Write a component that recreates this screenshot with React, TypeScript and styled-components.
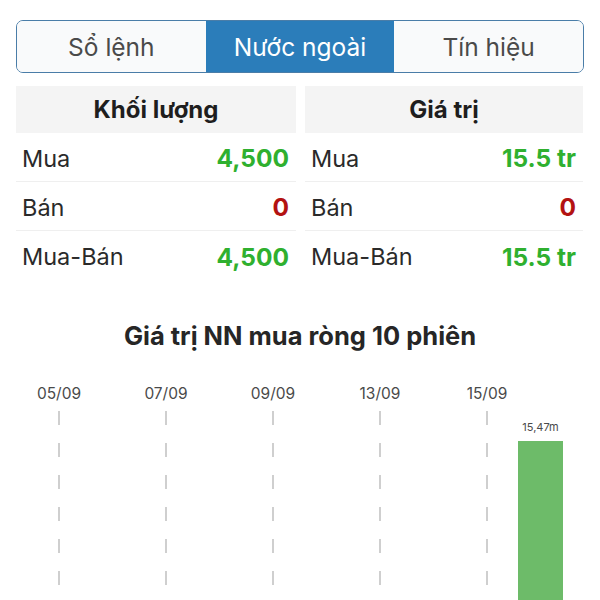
import styled, { createGlobalStyle } from 'styled-components';

const Global = createGlobalStyle`
  body {
    margin: 0;
    background: #fff;
    font-family: Inter, "Noto Sans", "Liberation Sans", sans-serif;
  }
`

const Page = styled.div`
  width: 600px;
  height: 600px;
  overflow: hidden;
  padding: 20px 16px 0;
  box-sizing: border-box;
`

const Segmented = styled.div`
  display: grid;
  grid-template-columns: repeat(3, 1fr);
  height: 53px;
  border: 1.5px solid #4a7da8;
  border-radius: 7px;
  overflow: hidden;
  box-sizing: border-box;
`

const Segment = styled.div<{ $active?: boolean }>`
  display: flex;
  align-items: center;
  justify-content: center;
  font-size: 24.5px;
  color: ${p => (p.$active ? '#fff' : '#4a4a4a')};
  background: ${p => (p.$active ? '#2b7dba' : '#f9fafb')};
`

const Cards = styled.div`
  display: grid;
  grid-template-columns: 280px 278px;
  gap: 9px;
  margin-top: 13px;
`

const Card = styled.div`
  display: flex;
  flex-direction: column;
`

const CardHead = styled.div`
  height: 47px;
  background: #f4f4f4;
  display: flex;
  align-items: center;
  justify-content: center;
  font-size: 24px;
  font-weight: 700;
  color: #1e1e1e;
`

const Row = styled.div`
  height: 49px;
  display: flex;
  align-items: center;
  justify-content: space-between;
  padding: 2px 7px 0 6px;
  box-sizing: border-box;
  border-bottom: 1px solid #efefef;
  &:last-child {
    border-bottom: none;
  }
`

const Label = styled.span`
  font-size: 23.5px;
  color: #2a2a2a;
`

const Value = styled.span<{ $tone: 'up' | 'down' }>`
  font-size: 24.5px;
  font-weight: 700;
  color: ${p => (p.$tone === 'up' ? '#2fb02f' : '#b31212')};
`

const Title = styled.div`
  margin-top: 41px;
  text-align: center;
  font-size: 25.5px;
  line-height: 30px;
  font-weight: 700;
  color: #262626;
`

const Chart = styled.svg`
  display: block;
  margin: 20px 0 0 -16px;
`

type Line = { label: string; value: string; tone: 'up' | 'down' }

const volume: Line[] = [
  { label: 'Mua', value: '4,500', tone: 'up' },
  { label: 'Bán', value: '0', tone: 'down' },
  { label: 'Mua-Bán', value: '4,500', tone: 'up' },
]

const money: Line[] = [
  { label: 'Mua', value: '15.5 tr', tone: 'up' },
  { label: 'Bán', value: '0', tone: 'down' },
  { label: 'Mua-Bán', value: '15.5 tr', tone: 'up' },
]

const dates = ['05/09', '07/09', '09/09', '13/09', '15/09']

function Table({ title, lines }: { title: string; lines: Line[] }) {
  return (
    <Card>
      <CardHead>{title}</CardHead>
      {lines.map(l => (
        <Row key={l.label}>
          <Label>{l.label}</Label>
          <Value $tone={l.tone}>{l.value}</Value>
        </Row>
      ))}
    </Card>
  )
}

function App() {
  const top = 370
  return (
    <Page>
      <Global />
      <Segmented>
        <Segment>Sổ lệnh</Segment>
        <Segment $active>Nước ngoài</Segment>
        <Segment>Tín hiệu</Segment>
      </Segmented>
      <Cards>
        <Table title="Khối lượng" lines={volume} />
        <Table title="Giá trị" lines={money} />
      </Cards>
      <Title>Giá trị NN mua ròng 10 phiên</Title>
      <Chart width={600} height={240} viewBox={`0 ${top} 600 240`}>
        {dates.map((d, i) => {
          const x = 59 + i * 107
          return (
            <g key={d}>
              <text x={x} y={398} textAnchor="middle" fontSize={15.5} fill="#4a4a4a" fontFamily="Inter, sans-serif">
                {d}
              </text>
              <line x1={x} y1={410} x2={x} y2={610} stroke="#b0b0b0" strokeWidth={1.2} strokeDasharray="14 18" />
            </g>
          )
        })}
        <text x={540.5} y={430} textAnchor="middle" fontSize={11} fill="#4a4a4a" fontFamily="Inter, sans-serif">
          15,47m
        </text>
        <rect x={518} y={440} width={45} height={170} fill="#6dbb69" />
      </Chart>
    </Page>
  )
}

export default App
